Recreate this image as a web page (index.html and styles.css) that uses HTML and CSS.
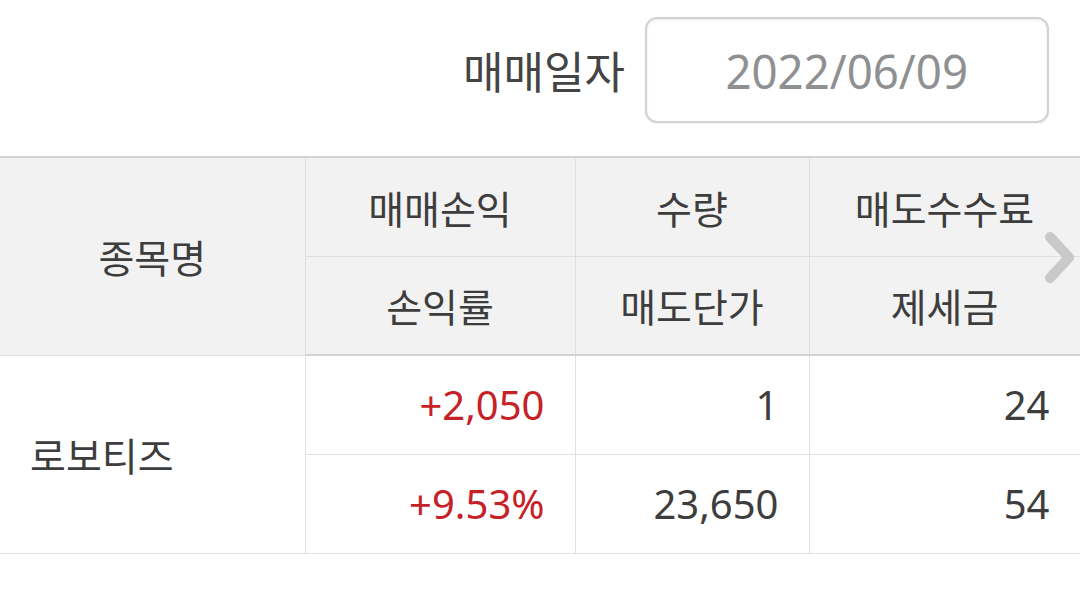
FILE: index.html
```html
<!DOCTYPE html>
<html lang="ko">
<head>
  <meta charset="UTF-8" />
  <meta name="viewport" content="width=device-width, initial-scale=1.0"/>
  <title>매매손익</title>
  <link rel="stylesheet" href="styles.css">
</head>
<body>
  <div class="page">
    <!-- date row -->
    <div class="date-row">
      <span class="date-label">매매일자</span>
      <div class="date-box"><span class="date-value">2022/06/09</span></div>
    </div>

    <!-- result table -->
    <div class="table-wrap">
      <table class="result">
        <colgroup>
          <col class="c-name">
          <col class="c-pl">
          <col class="c-qty">
          <col class="c-fee">
        </colgroup>
        <thead>
          <tr>
            <th rowspan="2">종목명</th>
            <th>매매손익</th>
            <th>수량</th>
            <th>매도수수료</th>
          </tr>
          <tr>
            <th>손익률</th>
            <th>매도단가</th>
            <th>제세금</th>
          </tr>
        </thead>
        <tbody>
          <tr>
            <td rowspan="2" class="name">로보티즈</td>
            <td class="num up">+2,050</td>
            <td class="num">1</td>
            <td class="num">24</td>
          </tr>
          <tr>
            <td class="num up">+9.53%</td>
            <td class="num">23,650</td>
            <td class="num">54</td>
          </tr>
        </tbody>
      </table>
      <svg class="more" width="40" height="62" viewBox="0 0 40 62">
        <path d="M10 10 L29 30.5 L10 51" fill="none" stroke="#c9c9ca" stroke-width="10" stroke-linecap="round" stroke-linejoin="round"/>
      </svg>
    </div>
  </div>
</body>
</html>
```

FILE: styles.css
```css
:root {
  --text: #3d3d3d;
  --muted: #8f9092;
  --line: #e0e0e0;
  --line-strong: #d3d3d3;
  --head-bg: #f2f2f2;
  --up: #c62127;
}

* { box-sizing: border-box; margin: 0; padding: 0; }
body {
  background: #fff;
  color: var(--text);
  font-family: "Noto Sans", "Noto Sans CJK KR", sans-serif;
}
.page { width: 1080px; }

.date-row {
  display: flex;
  justify-content: flex-end;
  align-items: flex-start;
  gap: 20px;
  padding: 17px 31px 0 0;
  height: 156px;
}
.date-label {
  font-family: "Noto Sans CJK KR", sans-serif;
  font-size: 44px;
  line-height: 106px;
  color: #444;
}
.date-box {
  width: 404px;
  height: 106px;
  border: 2px solid #d2d2d2;
  border-radius: 12px;
  box-shadow: inset 0 1px 3px rgba(0, 0, 0, 0.08), 0 1px 2px rgba(0, 0, 0, 0.06);
  display: flex;
  justify-content: center;
  align-items: center;
}
.date-value {
  display: inline-block;
  font-size: 48px;
  color: var(--muted);
  transform: scaleX(0.95);
}

.table-wrap { position: relative; }
.result {
  width: 1080px;
  border-collapse: collapse;
  table-layout: fixed;
  border-top: 2px solid var(--line-strong);
}
.c-name { width: 305px; }
.c-pl { width: 270px; }
.c-qty { width: 234px; }
.c-fee { width: 271px; }

.result th, .result td {
  height: 99px;
  border: 1px solid var(--line);
  padding: 0 30px;
}
.result th:first-child, .result td:first-child { border-left: none; }
.result thead tr:last-child th { border-bottom: 2px solid var(--line-strong); }
.result th {
  background: var(--head-bg);
  font-family: "Noto Sans CJK KR", sans-serif;
  font-weight: 400;
  font-size: 39px;
  color: var(--text);
  text-align: center;
}
.result td {
  font-size: 40px;
  color: var(--text);
}
.result td.name {
  font-family: "Noto Sans CJK KR", sans-serif;
  font-size: 39px;
  text-align: left;
}
.result td.num { text-align: right; }
.result td.up { color: var(--up); }

.more {
  position: absolute;
  right: 0;
  top: 71px;
}
```
